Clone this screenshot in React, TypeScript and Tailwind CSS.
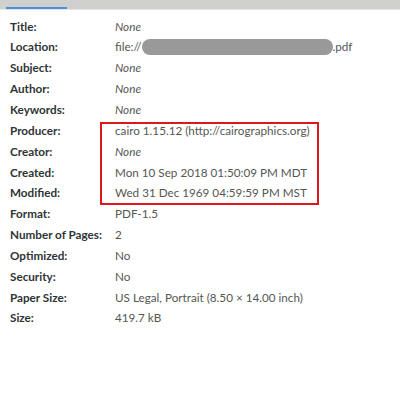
import React from 'react';

const rows: { label: string; value: string; italic?: boolean; redacted?: boolean }[] = [
  { label: 'Title:', value: 'None', italic: true },
  { label: 'Location:', value: 'file://', redacted: true },
  { label: 'Subject:', value: 'None', italic: true },
  { label: 'Author:', value: 'None', italic: true },
  { label: 'Keywords:', value: 'None', italic: true },
  { label: 'Producer:', value: 'cairo 1.15.12 (http://cairographics.org)' },
  { label: 'Creator:', value: 'None', italic: true },
  { label: 'Created:', value: 'Mon 10 Sep 2018 01:50:09 PM MDT' },
  { label: 'Modified:', value: 'Wed 31 Dec 1969 04:59:59 PM MST' },
  { label: 'Format:', value: 'PDF-1.5' },
  { label: 'Number of Pages:', value: '2' },
  { label: 'Optimized:', value: 'No' },
  { label: 'Security:', value: 'No' },
  { label: 'Paper Size:', value: 'US Legal, Portrait (8.50 × 14.00 inch)' },
  { label: 'Size:', value: '419.7 kB' },
];

function Row({ r }: { r: (typeof rows)[number] }) {
  return (
    <div className="flex items-center h-[20.85px] whitespace-nowrap">
      <div className="w-[105px] shrink-0 font-bold text-[#2e3436]">{r.label}</div>
      <div className={r.italic ? 'italic text-[#555753]' : 'text-[#555753]'}>
        {r.redacted ? (
          <span className="flex items-center">
            file://
            <span className="inline-block w-[191px] h-[16px] rounded-full bg-[#999999]" />
            .pdf
          </span>
        ) : (
          r.value
        )}
      </div>
    </div>
  );
}

export default function App() {
  return (
    <div className="w-[400px] h-[400px] bg-white overflow-hidden text-[11.7px]" style={{ fontFamily: 'Lato, sans-serif' }}>
      <div className="h-[9px] bg-[#d0d0ce] flex items-end pl-[6px]">
        <div className="w-[61px] h-[2px] bg-[#4a90d9]" />
      </div>
      <div className="h-px bg-[#e6e6e4]" />
      <div className="pl-[10px] pt-[6px] relative">
        {rows.map((r) => (
          <Row key={r.label} r={r} />
        ))}
        <div className="absolute left-[100px] top-[112px] w-[219px] h-[83px] border-2 border-[#e0161e]" />
      </div>
    </div>
  );
}
